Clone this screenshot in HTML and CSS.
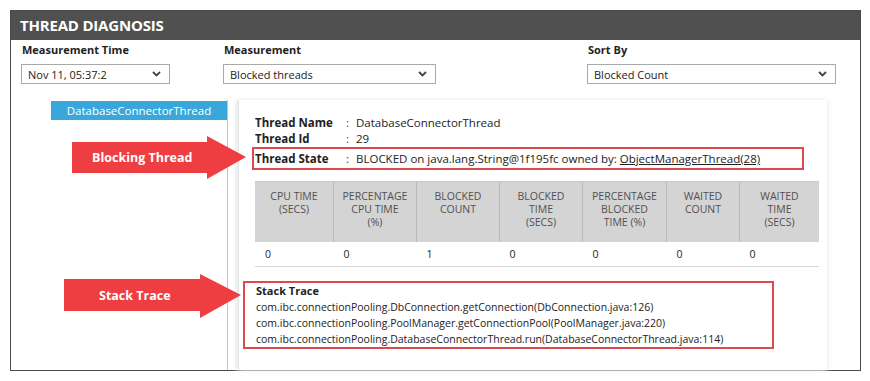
FILE: index.html
```html
<!DOCTYPE html>
<html lang="en">
<head>
    <meta charset="UTF-8">
    <title>Thread Diagnosis</title>
    <link rel="stylesheet" href="styles.css">
</head>
<body>
    <div class="panel">
        <div class="panel-head">THREAD DIAGNOSIS</div>
        <div class="filters">
            <div class="field field-time">
                <div class="field-label">Measurement Time</div>
                <div class="select select-time">
                    <span>Nov 11, 05:37:2</span>
                    <svg class="chevron" width="9" height="6" viewBox="0 0 9 6"><polyline points="1,1 4.5,4.5 8,1" fill="none" stroke="#444" stroke-width="1.8"/></svg>
                </div>
            </div>
            <div class="field field-measure">
                <div class="field-label">Measurement</div>
                <div class="select select-measure">
                    <span>Blocked threads</span>
                    <svg class="chevron" width="9" height="6" viewBox="0 0 9 6"><polyline points="1,1 4.5,4.5 8,1" fill="none" stroke="#444" stroke-width="1.8"/></svg>
                </div>
            </div>
            <div class="field field-sort">
                <div class="field-label">Sort By</div>
                <div class="select select-sort">
                    <span>Blocked Count</span>
                    <svg class="chevron" width="9" height="6" viewBox="0 0 9 6"><polyline points="1,1 4.5,4.5 8,1" fill="none" stroke="#444" stroke-width="1.8"/></svg>
                </div>
            </div>
        </div>

        <div class="content">
            <div class="side">
                <div class="tab">DatabaseConnectorThread</div>
            </div>
            <div class="detail">
                <div class="info">
                    <div class="info-row">
                        <span class="info-key">Thread Name</span>
                        <span class="info-sep">:</span>
                        <span class="info-val">DatabaseConnectorThread</span>
                    </div>
                    <div class="info-row">
                        <span class="info-key">Thread Id</span>
                        <span class="info-sep">:</span>
                        <span class="info-val">29</span>
                    </div>
                    <div class="info-row highlight">
                        <span class="info-key">Thread State</span>
                        <span class="info-sep">:</span>
                        <span class="info-val">BLOCKED on java.lang.String@1f195fc owned by: <a class="owner">ObjectManagerThread(28)</a></span>
                    </div>
                </div>

                <table class="stats">
                    <thead>
                        <tr>
                            <th class="c1">CPU TIME<br>(SECS)</th>
                            <th class="c2">PERCENTAGE<br>CPU TIME<br>(%)</th>
                            <th class="c3">BLOCKED<br>COUNT</th>
                            <th class="c4">BLOCKED<br>TIME<br>(SECS)</th>
                            <th class="c5">PERCENTAGE<br>BLOCKED<br>TIME (%)</th>
                            <th class="c6">WAITED<br>COUNT</th>
                            <th class="c7">WAITED<br>TIME<br>(SECS)</th>
                        </tr>
                    </thead>
                    <tbody>
                        <tr>
                            <td>0</td><td>0</td><td>1</td><td>0</td><td>0</td><td>0</td><td>0</td>
                        </tr>
                    </tbody>
                </table>

                <div class="trace highlight">
                    <div class="trace-title">Stack Trace</div>
                    <div>com.ibc.connectionPooling.DbConnection.getConnection(DbConnection.java:126)</div>
                    <div>com.ibc.connectionPooling.PoolManager.getConnectionPool(PoolManager.java:220)</div>
                    <div>com.ibc.connectionPooling.DatabaseConnectorThread.run(DatabaseConnectorThread.java:114)</div>
                </div>
            </div>
        </div>

        <!-- callout arrows -->
        <div class="callout callout-blocking">
            <svg width="174" height="43" viewBox="0 0 174 43"><polygon points="0,6 135,6 135,0 174,21 135,43 135,37 0,37" fill="#ef3e42"/></svg>
            <span class="callout-text">Blocking Thread</span>
        </div>
        <div class="callout callout-stack">
            <svg width="177" height="44" viewBox="0 0 177 44"><polygon points="0,5 136,5 136,0 177,21 136,44 136,37 0,37" fill="#ef3e42"/></svg>
            <span class="callout-text">Stack Trace</span>
        </div>
    </div>
</body>
</html>
```

FILE: styles.css
```css
body {
    margin: 0;
    padding: 10px;
    background-color: #fff;
    font-family: "Open Sans", "Noto Sans", sans-serif;
    color: #222;
}
.panel {
    position: relative;
    width: 849px;
    height: 359px;
    border: 1px solid #4a4a4a;
    display: flex;
    flex-direction: column;
}
.panel-head {
    background-color: #505050;
    color: #fff;
    font-weight: bold;
    font-size: 15px;
    height: 29px;
    line-height: 29px;
    padding-left: 9px;
    letter-spacing: -0.2px;
}
.filters {
    display: flex;
    padding: 0 0 0 10px;
    height: 60px;
}
.field-time {
    width: 202px;
}
.field-measure {
    width: 364px;
}
.field-label {
    font-size: 11px;
    font-weight: bold;
    height: 24px;
    line-height: 20px;
    padding-left: 1px;
}
.select {
    height: 18px;
    border: 1px solid #a9a9a9;
    display: flex;
    align-items: center;
    justify-content: space-between;
    padding: 0 8px 0 6px;
    font-size: 11px;
    color: #222;
}
.select-time {
    width: 133px;
}
.select-measure {
    width: 197px;
}
.select-sort {
    width: 233px;
}
.chevron {
    display: block;
}
.content {
    flex: 1;
    display: flex;
    min-height: 0;
}
.side {
    width: 216px;
    border-right: 1px solid #c4c4c4;
    padding-top: 1px;
}
.tab {
    margin-left: 40px;
    height: 19px;
    line-height: 19px;
    background-color: #3aa7db;
    color: #fff;
    font-size: 11.5px;
    text-align: center;
}
.detail {
    margin-left: 10px;
    width: 584px;
    border-left: 1px solid #e4e4e4;
    box-shadow: -3px 0 3px #eee, 2px 0 4px #f3eef0;
    padding: 15px 0 0 4px;
    overflow: hidden;
}
.info {
    font-size: 11.5px;
}
.info-row {
    display: flex;
    height: 16px;
    line-height: 16px;
    padding-left: 12px;
}
.info-key {
    width: 91px;
    font-weight: bold;
}
.info-sep {
    width: 10px;
    color: #444;
}
.info-val {
    color: #222;
}
.owner {
    text-decoration: underline;
}
.highlight {
    border: 2px solid #dc4a4e;
}
.info-row.highlight {
    width: 547px;
    height: 19px;
    line-height: 19px;
    margin-left: 9px;
    padding-left: 1px;
}
.stats {
    margin: 11px 0 0 12px;
    width: 564px;
    border-collapse: collapse;
    font-size: 10.5px;
    table-layout: fixed;
}
.stats th {
    background-color: #d4d4d4;
    color: #505050;
    font-weight: normal;
    height: 52px;
    vertical-align: top;
    padding: 8px 0 0;
    line-height: 13px;
    border-left: 1px solid #b8b8b8;
    border-top: 1px solid #c8c8c8;
}
.stats th:first-child {
    border-left: none;
}
.stats .c1 { width: 78px; }
.stats .c2 { width: 82px; }
.stats .c3 { width: 82px; }
.stats .c4 { width: 82px; }
.stats .c5 { width: 83px; }
.stats .c6 { width: 72px; }
.stats td {
    height: 24px;
    padding: 0 0 0 10px;
    color: #222;
    border-bottom: 1px solid #d8d8d8;
}
.trace {
    margin: 14px 0 0 0;
    width: 531px;
    padding: 0 0 0 11px;
    font-size: 10.5px;
    line-height: 16px;
    color: #222;
    box-sizing: border-box;
}
.trace-title {
    font-weight: bold;
    font-size: 11px;
}
.callout {
    position: absolute;
}
.callout svg {
    display: block;
}
.callout-text {
    position: absolute;
    color: #fff;
    font-weight: bold;
    font-size: 12.5px;
    top: 0;
    line-height: 43px;
}
.callout-blocking {
    left: 61px;
    top: 125px;
}
.callout-blocking .callout-text {
    left: 20px;
}
.callout-stack {
    left: 53px;
    top: 263px;
}
.callout-stack .callout-text {
    left: 35px;
}
```
